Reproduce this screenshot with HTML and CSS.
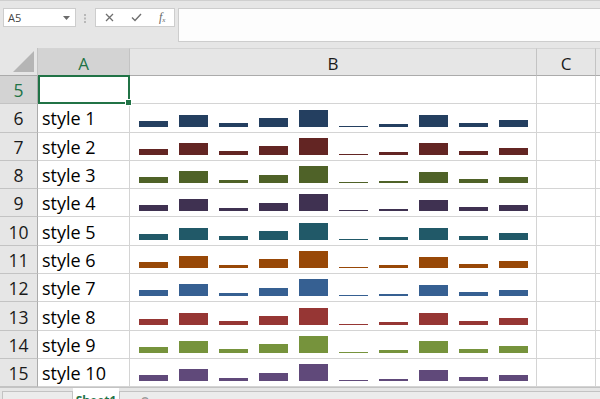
FILE: index.html
```html
<!DOCTYPE html>
<html>
<head>
<meta charset="utf-8">
<link rel="stylesheet" href="styles.css">
</head>
<body>
<div class="app">
  <div class="toolbar">
    <div class="namebox"><span class="nb-text">A5</span><svg class="caret" width="7" height="4" viewBox="0 0 7 4"><path d="M0 0H7L3.5 4Z" fill="#6b6b6b"/></svg></div>
    <svg class="grip" width="2" height="9" viewBox="0 0 2 9"><rect x="0" y="0" width="2" height="2" fill="#b8b8b8"/><rect x="0" y="3.5" width="2" height="2" fill="#b8b8b8"/><rect x="0" y="7" width="2" height="2" fill="#b8b8b8"/></svg>
    <div class="fxbox">
      <svg class="ico" width="9" height="9" viewBox="0 0 9 9"><path d="M1 1L8 8M8 1L1 8" stroke="#6f6f6f" stroke-width="1.3" fill="none"/></svg>
      <svg class="ico" width="11" height="9" viewBox="0 0 11 9"><path d="M1 4.5L4 7.5L10 1" stroke="#6f6f6f" stroke-width="1.4" fill="none"/></svg>
      <span class="fx">f<sub>x</sub></span>
    </div>
    <div class="formula"></div>
  </div>

  <div class="sheet">
    <div class="corner"><svg width="21" height="21" viewBox="0 0 21 21"><path d="M21 0V21H0Z" fill="#b5b5b5"/></svg></div>
    <div class="colhead sel">A</div>
    <div class="colhead">B</div>
    <div class="colhead">C</div>
    <div class="colhead last"></div>

    <div class="rowhead sel">5</div>
    <div class="cell active"></div>
    <div class="cell"></div>
    <div class="cell"></div>
    <div class="cell last"></div>

    <div class="rowhead">6</div>
    <div class="cell label">style 1</div>
    <div class="cell spark s1"><i style="height:6px"></i><i style="height:12px"></i><i style="height:3.5px"></i><i style="height:8.7px"></i><i style="height:17px"></i><i style="height:1px"></i><i style="height:2.7px"></i><i style="height:11.5px"></i><i style="height:4px"></i><i style="height:6.7px"></i></div>
    <div class="cell"></div>
    <div class="cell last"></div>

    <div class="rowhead">7</div>
    <div class="cell label">style 2</div>
    <div class="cell spark s2"><i style="height:6px"></i><i style="height:12px"></i><i style="height:3.5px"></i><i style="height:8.7px"></i><i style="height:17px"></i><i style="height:1px"></i><i style="height:2.7px"></i><i style="height:11.5px"></i><i style="height:4px"></i><i style="height:6.7px"></i></div>
    <div class="cell"></div>
    <div class="cell last"></div>

    <div class="rowhead">8</div>
    <div class="cell label">style 3</div>
    <div class="cell spark s3"><i style="height:6px"></i><i style="height:12px"></i><i style="height:3.5px"></i><i style="height:8.7px"></i><i style="height:17px"></i><i style="height:1px"></i><i style="height:2.7px"></i><i style="height:11.5px"></i><i style="height:4px"></i><i style="height:6.7px"></i></div>
    <div class="cell"></div>
    <div class="cell last"></div>

    <div class="rowhead">9</div>
    <div class="cell label">style 4</div>
    <div class="cell spark s4"><i style="height:6px"></i><i style="height:12px"></i><i style="height:3.5px"></i><i style="height:8.7px"></i><i style="height:17px"></i><i style="height:1px"></i><i style="height:2.7px"></i><i style="height:11.5px"></i><i style="height:4px"></i><i style="height:6.7px"></i></div>
    <div class="cell"></div>
    <div class="cell last"></div>

    <div class="rowhead">10</div>
    <div class="cell label">style 5</div>
    <div class="cell spark s5"><i style="height:6px"></i><i style="height:12px"></i><i style="height:3.5px"></i><i style="height:8.7px"></i><i style="height:17px"></i><i style="height:1px"></i><i style="height:2.7px"></i><i style="height:11.5px"></i><i style="height:4px"></i><i style="height:6.7px"></i></div>
    <div class="cell"></div>
    <div class="cell last"></div>

    <div class="rowhead">11</div>
    <div class="cell label">style 6</div>
    <div class="cell spark s6"><i style="height:6px"></i><i style="height:12px"></i><i style="height:3.5px"></i><i style="height:8.7px"></i><i style="height:17px"></i><i style="height:1px"></i><i style="height:2.7px"></i><i style="height:11.5px"></i><i style="height:4px"></i><i style="height:6.7px"></i></div>
    <div class="cell"></div>
    <div class="cell last"></div>

    <div class="rowhead">12</div>
    <div class="cell label">style 7</div>
    <div class="cell spark s7"><i style="height:6px"></i><i style="height:12px"></i><i style="height:3.5px"></i><i style="height:8.7px"></i><i style="height:17px"></i><i style="height:1px"></i><i style="height:2.7px"></i><i style="height:11.5px"></i><i style="height:4px"></i><i style="height:6.7px"></i></div>
    <div class="cell"></div>
    <div class="cell last"></div>

    <div class="rowhead">13</div>
    <div class="cell label">style 8</div>
    <div class="cell spark s8"><i style="height:6px"></i><i style="height:12px"></i><i style="height:3.5px"></i><i style="height:8.7px"></i><i style="height:17px"></i><i style="height:1px"></i><i style="height:2.7px"></i><i style="height:11.5px"></i><i style="height:4px"></i><i style="height:6.7px"></i></div>
    <div class="cell"></div>
    <div class="cell last"></div>

    <div class="rowhead">14</div>
    <div class="cell label">style 9</div>
    <div class="cell spark s9"><i style="height:6px"></i><i style="height:12px"></i><i style="height:3.5px"></i><i style="height:8.7px"></i><i style="height:17px"></i><i style="height:1px"></i><i style="height:2.7px"></i><i style="height:11.5px"></i><i style="height:4px"></i><i style="height:6.7px"></i></div>
    <div class="cell"></div>
    <div class="cell last"></div>

    <div class="rowhead">15</div>
    <div class="cell label">style 10</div>
    <div class="cell spark s10"><i style="height:6px"></i><i style="height:12px"></i><i style="height:3.5px"></i><i style="height:8.7px"></i><i style="height:17px"></i><i style="height:1px"></i><i style="height:2.7px"></i><i style="height:11.5px"></i><i style="height:4px"></i><i style="height:6.7px"></i></div>
    <div class="cell"></div>
    <div class="cell last"></div>
  </div>

  <div class="tabbar">
    <div class="tabnav"></div>
    <div class="tab">Sheet1</div>
    <div class="tabrest"><span class="plus">⊕</span></div>
  </div>
</div>
</body>
</html>
```

FILE: styles.css
```css
* { box-sizing: border-box; }
html, body { margin: 0; padding: 0; }
body {
  width: 600px;
  height: 399px;
  overflow: hidden;
  background: #e6e6e6;
  font-family: "Open Sans", "Segoe UI", sans-serif;
}
.app { width: 600px; height: 399px; display: flex; flex-direction: column; }

.toolbar {
  height: 48px;
  flex: none;
  display: flex;
  align-items: flex-start;
  padding-top: 8px;
  padding-left: 3px;
  border-top: 1px solid #cfcfcf;
}
.namebox {
  width: 73px;
  height: 19px;
  margin-top: -1px;
  background: #fff;
  border: 1px solid #cdcdcd;
  display: flex;
  align-items: center;
  justify-content: space-between;
  padding: 0 5px 0 4px;
}
.nb-text { font-size: 11px; color: #444; }
.grip { margin: 5px 9px 0 8px; }
.fxbox {
  width: 80px;
  height: 19px;
  margin-top: -1px;
  background: #fff;
  border: 1px solid #cdcdcd;
  display: flex;
  align-items: center;
  padding-left: 9px;
  gap: 17px;
}
.fx {
  font-family: "Liberation Serif", serif;
  font-style: italic;
  font-size: 12px;
  color: #666;
  line-height: 1;
}
.fx sub { font-size: 7px; vertical-align: -1px; }
.formula {
  flex: 1;
  height: 34px;
  margin-top: -1px;
  margin-left: 3px;
  background: #fdfdfd;
  border: 1px solid #cdcdcd;
  border-right: none;
}

.sheet {
  flex: none;
  display: grid;
  grid-template-columns: 38px 92px 407px 59px 4px;
  grid-template-rows: 28px repeat(11, 28.3px);
  background: #fff;
}
.corner {
  background: #e6e6e6;
  border-right: 1px solid #c3c3c3;
  border-bottom: 1px solid #ababab;
  display: flex;
  align-items: flex-end;
  justify-content: flex-end;
  padding: 0 3px 3px 0;
}
.colhead {
  background: #e6e6e6;
  border-right: 1px solid #c3c3c3;
  border-bottom: 1px solid #ababab;
  border-top: 1px solid #d4d4d4;
  display: flex;
  align-items: center;
  justify-content: center;
  font-size: 17px;
  color: #1a1a1a;
  padding-top: 3px;
}
.colhead.sel, .rowhead.sel {
  background: #d3d3d3;
  color: #217346;
}
.rowhead {
  background: #e6e6e6;
  border-right: 1px solid #ababab;
  border-bottom: 1px solid #c3c3c3;
  display: flex;
  align-items: center;
  justify-content: center;
  font-size: 17.5px;
  color: #1a1a1a;
  padding-top: 1px;
}
.cell {
  border-right: 1px solid #d4d4d4;
  border-bottom: 1px solid #d4d4d4;
  background: #fff;
  position: relative;
}
.cell.last { border-right: none; background: #fff; }
.colhead.last { border-right: none; }
.cell.active::after {
  content: "";
  position: absolute;
  left: 0;
  top: -1px;
  right: -1px;
  bottom: -1px;
  border: 2px solid #217346;
}
.cell.active::before {
  content: "";
  position: absolute;
  right: -3px;
  bottom: -3px;
  width: 5px;
  height: 5px;
  background: #217346;
  border: 1px solid #fff;
  z-index: 2;
}
.label {
  font-size: 18px;
  color: #000;
  display: flex;
  align-items: center;
  padding-left: 4px;
  padding-top: 1px;
  white-space: nowrap;
}
.spark {
  display: flex;
  align-items: flex-end;
  gap: 11px;
  padding-left: 9px;
  padding-bottom: 5px;
}
.spark i { display: block; width: 29px; flex: none; }
.s1 i { background: #243f60; }
.s2 i { background: #632523; }
.s3 i { background: #4f6228; }
.s4 i { background: #3f3151; }
.s5 i { background: #215968; }
.s6 i { background: #984807; }
.s7 i { background: #366092; }
.s8 i { background: #963634; }
.s9 i { background: #76933c; }
.s10 i { background: #60497a; }

.tabbar {
  flex: 1;
  display: flex;
  align-items: flex-start;
  background: #e6e6e6;
  border-top: 1px solid #c3c3c3;
  padding-top: 3px;
  overflow: hidden;
}
.tabnav {
  width: 71px;
  height: 12px;
  margin-left: 2px;
  border: 1px solid #c3c3c3;
  border-bottom: none;
  background: #ececec;
}
.tab {
  width: 46px;
  height: 12px;
  margin-top: -3px;
  background: #fff;
  color: #217346;
  font-size: 12px;
  font-weight: bold;
  padding-top: 7px;
  text-align: center;
  line-height: 1;
}
.tabrest {
  flex: 1;
  height: 12px;
  border: 1px solid #c3c3c3;
  border-right: none;
  border-bottom: none;
  background: #ececec;
  padding-left: 20px;
  font-size: 12px;
  color: #888;
  line-height: 1;
  padding-top: 3px;
}
```
